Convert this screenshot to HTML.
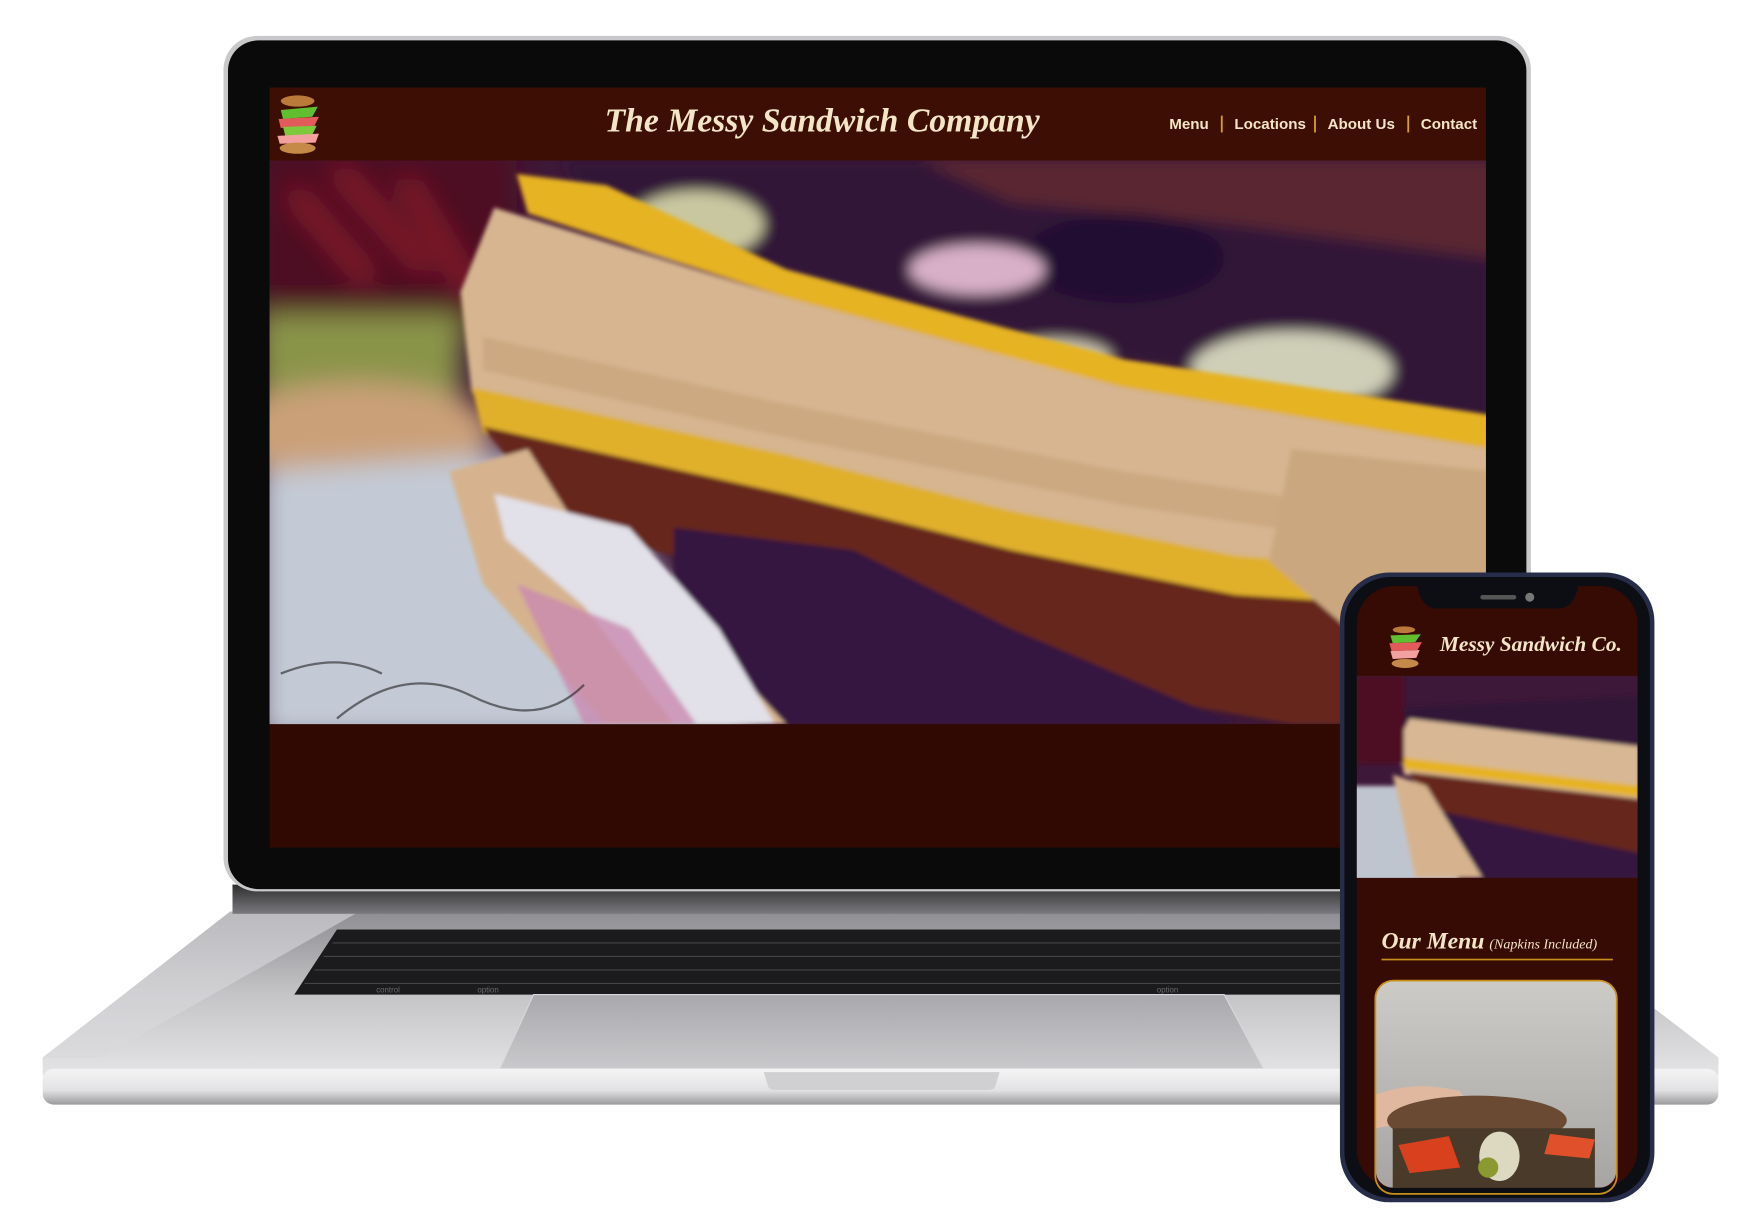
<!DOCTYPE html>
<html><head><meta charset="utf-8"><style>
html,body{margin:0;padding:0;background:#fff;width:1760px;height:1227px;overflow:hidden}
svg{display:block}
</style></head><body>
<svg width="1760" height="1227" viewBox="0 0 1567 1093" preserveAspectRatio="none" xmlns="http://www.w3.org/2000/svg">
<defs>
<filter id="b2" x="-20%" y="-20%" width="140%" height="140%"><feGaussianBlur stdDeviation="2"/></filter>
<filter id="b6" x="-20%" y="-20%" width="140%" height="140%"><feGaussianBlur stdDeviation="6"/></filter>
<filter id="b12" x="-20%" y="-20%" width="140%" height="140%"><feGaussianBlur stdDeviation="12"/></filter>
<linearGradient id="deck" x1="0" y1="0" x2="0" y2="1"><stop offset="0" stop-color="#8e8e92"/><stop offset="0.5" stop-color="#c4c4c7"/><stop offset="1" stop-color="#e4e4e6"/></linearGradient>
<linearGradient id="lip" x1="0" y1="0" x2="0" y2="1"><stop offset="0" stop-color="#f4f4f5"/><stop offset="0.6" stop-color="#e2e2e4"/><stop offset="1" stop-color="#9a9a9e"/></linearGradient>
<linearGradient id="hinge" x1="0" y1="0" x2="0" y2="1"><stop offset="0" stop-color="#2e2e30"/><stop offset="1" stop-color="#7a7a7e"/></linearGradient>
<linearGradient id="pad" x1="0" y1="0" x2="0" y2="1"><stop offset="0" stop-color="#a9a9ad"/><stop offset="1" stop-color="#c9c9cc"/></linearGradient>
<linearGradient id="card" x1="0" y1="0" x2="0" y2="1"><stop offset="0" stop-color="#cdcbc7"/><stop offset="1" stop-color="#a7a5a1"/></linearGradient>
<clipPath id="hero"><rect x="240" y="143" width="1083" height="502"/></clipPath>
<clipPath id="phimg"><rect x="1208" y="602" width="250" height="180"/></clipPath>
<clipPath id="cardc"><rect x="1225" y="874" width="214" height="184" rx="15"/></clipPath>
</defs>

<polygon points="205,812 1360,812 1530,942 1530,958 38,958 38,942" fill="url(#deck)"/>
<polygon points="205,812 320,812 90,942 38,942" fill="#d9d9dc" opacity="0.6"/>
<polygon points="300,828 1200,828 1196,886 262,886" fill="#1b1b1d"/>
<g stroke="#444" stroke-width="1">
<line x1="296" y1="840" x2="1200" y2="840"/><line x1="288" y1="852" x2="1199" y2="852"/><line x1="280" y1="864" x2="1198" y2="864"/><line x1="271" y1="876" x2="1197" y2="876"/>
</g>
<g fill="#6a6a6e" font-family="Liberation Sans" font-size="7"><text x="335" y="884">control</text><text x="425" y="884">option</text><text x="1030" y="884">option</text></g>
<polygon points="475,886 1090,886 1125,952 445,952" fill="url(#pad)" stroke="#d8d8da" stroke-width="1"/>
<rect x="38" y="952" width="1492" height="32" rx="10" fill="url(#lip)"/>
<path d="M680,955 L890,955 L886,968 Q885,971 880,971 L690,971 Q685,971 684,968 Z" fill="#d0d0d3"/>
<rect x="207" y="788" width="1150" height="26" fill="url(#hinge)"/>
<rect x="199" y="32" width="1164" height="762" rx="30" fill="#c9c9cc"/>
<rect x="203" y="36" width="1156" height="756" rx="27" fill="#0a0a0b"/>
<rect x="240" y="78" width="1083" height="677" fill="#300a02"/>
<rect x="240" y="78" width="1083" height="65" fill="#3c0e04"/>
<g>
<ellipse cx="265" cy="90" rx="15" ry="5" fill="#b97a3a"/>
<path d="M250,98 L283,95 L278,104 L252,106Z" fill="#5fbf2e"/>
<path d="M248,106 L284,104 L280,112 L250,114Z" fill="#e25a5a"/>
<path d="M252,113 L282,112 L278,120 L254,121Z" fill="#7ec83b"/>
<path d="M247,121 L284,119 L281,127 L249,128Z" fill="#f2a0a0"/>
<ellipse cx="265" cy="132" rx="16" ry="5" fill="#c58a48"/>
</g>
<text x="732" y="117" text-anchor="middle" font-family="Liberation Serif" font-style="italic" font-weight="bold" font-size="30" fill="#f3e5c6">The Messy Sandwich Company</text>
<g font-family="Liberation Sans" font-size="13.5" fill="#f3e5c6" font-weight="bold">
<text x="1041" y="115">Menu</text><text x="1099" y="115">Locations</text><text x="1182" y="115">About Us</text><text x="1265" y="115">Contact</text>
</g>
<g fill="#d9a21e"><rect x="1087" y="103" width="1.6" height="15"/><rect x="1170" y="103" width="1.6" height="15"/><rect x="1253" y="103" width="1.6" height="15"/></g>

<g clip-path="url(#hero)">
<rect x="240" y="143" width="1083" height="502" fill="#3e1838"/>
<g filter="url(#b12)">
<rect x="230" y="130" width="230" height="170" fill="#4e1024"/>
<path d="M260,170 L330,250 M300,150 L380,240 M360,160 L420,260" stroke="#a02030" stroke-width="10"/>
<rect x="230" y="280" width="180" height="80" fill="#8a9448"/>
<ellipse cx="320" cy="385" rx="120" ry="45" fill="#caa078"/>
<polygon points="230,420 520,400 680,660 230,660" fill="#c3cad6"/>
</g>
<g filter="url(#b6)">
<polygon points="500,143 1330,143 1330,380 1000,320 700,250 520,175" fill="#321638"/>
<polygon points="820,143 1330,143 1330,230 1100,200 900,180" fill="#5a2633"/>
<ellipse cx="1000" cy="230" rx="90" ry="40" fill="#231030"/>
<ellipse cx="870" cy="240" rx="60" ry="22" fill="#d8b0c8"/>
<ellipse cx="1150" cy="330" rx="90" ry="35" fill="#cfcfb8"/>
<ellipse cx="620" cy="200" rx="60" ry="30" fill="#c9c7a0"/>
<ellipse cx="940" cy="320" rx="50" ry="18" fill="#cfc7b0"/>
</g>
<g filter="url(#b2)">
<polygon points="460,155 540,165 700,240 1000,320 1330,370 1330,400 1000,345 700,265 470,190" fill="#e6b322"/>
<polygon points="440,185 700,265 1000,345 1330,400 1330,520 1100,500 900,460 700,410 420,350 410,260" fill="#d6b590"/>
<polygon points="430,300 700,360 1000,420 1330,470 1330,500 1000,450 700,390 430,330" fill="#c9a47c" opacity="0.7"/>
<polygon points="420,345 700,405 900,455 1100,495 1330,515 1330,545 1100,530 900,490 700,440 430,385" fill="#e0b02a"/>
<polygon points="430,380 700,440 900,490 1100,530 1330,545 1330,645 1150,645 900,600 700,520 500,470" fill="#66261f"/>
<polygon points="600,470 760,490 900,560 1100,645 600,645" fill="#35173f"/>
<polygon points="400,420 470,400 520,480 620,560 700,645 540,645 430,520" fill="#d6b38e"/>
<polygon points="440,440 560,470 640,560 690,645 600,645 520,540 450,480" fill="#e2e0e8"/>
<polygon points="460,520 560,560 620,645 520,645" fill="#c98ab0" opacity="0.8"/>
<polygon points="1150,400 1330,420 1330,580 1200,560 1130,500" fill="#caa77f"/>
</g>
<g stroke="#222" stroke-width="2" fill="none" opacity="0.6"><path d="M300,640 Q360,590 420,620 T520,610"/><path d="M250,600 Q300,580 340,600"/></g>
</g>

<rect x="1193" y="510" width="280" height="561" rx="44" fill="#272c48"/>
<rect x="1197" y="514" width="272" height="553" rx="41" fill="#0d0e14"/>
<rect x="1208" y="522" width="250" height="536" rx="34" fill="#360b03"/>
<path d="M1262,522 L1405,522 Q1402,540 1390,542 L1277,542 Q1265,540 1262,522Z" fill="#0d0e14"/>
<rect x="1318" y="530" width="32" height="4" rx="2" fill="#555"/>
<circle cx="1362" cy="532" r="4" fill="#777"/>
<g>
<ellipse cx="1250" cy="561" rx="10" ry="3" fill="#b97a3a"/>
<path d="M1238,566 L1265,565 L1260,572 L1240,573Z" fill="#5fbf2e"/>
<path d="M1237,573 L1266,572 L1262,579 L1239,580Z" fill="#e25a5a"/>
<path d="M1238,580 L1264,579 L1261,586 L1240,587Z" fill="#f2a0a0"/>
<ellipse cx="1251" cy="591" rx="12" ry="4" fill="#c58a48"/>
</g>
<text x="1282" y="580" font-family="Liberation Serif" font-style="italic" font-weight="bold" font-size="19" fill="#f3e5c6">Messy Sandwich Co.</text>
<g clip-path="url(#phimg)">
<rect x="1208" y="602" width="250" height="180" fill="#3e1838"/>
<g filter="url(#b2)">
<polygon points="1200,700 1280,700 1300,790 1200,790" fill="#bfc5cf"/>
<polygon points="1250,630 1460,620 1460,690 1250,650" fill="#321638"/>
<polygon points="1255,640 1460,665 1460,720 1250,690 1245,660" fill="#d8b894"/>
<polygon points="1250,675 1460,700 1460,710 1250,685" fill="#e6b322"/>
<polygon points="1255,688 1460,712 1460,760 1270,720" fill="#66261f"/>
<polygon points="1265,720 1460,760 1460,782 1290,782" fill="#35173f"/>
<polygon points="1240,690 1270,700 1320,782 1260,782" fill="#d6b38e"/>
<polygon points="1208,602 1250,602 1250,680 1208,680" fill="#4e1024"/>
</g>
</g>
<text x="1230" y="845" font-family="Liberation Serif" font-style="italic" font-weight="bold" font-size="21" fill="#f3e5c6">Our Menu</text>
<text x="1326" y="845" font-family="Liberation Serif" font-style="italic" font-size="12.5" fill="#f3e5c6">(Napkins Included)</text>
<rect x="1230" y="854" width="206" height="1.5" fill="#c8901a"/>
<g clip-path="url(#cardc)">
<rect x="1225" y="874" width="214" height="184" fill="url(#card)"/>
<path d="M1225,975 Q1260,962 1300,972 L1310,990 L1225,1005Z" fill="#e0b8a0"/>
<ellipse cx="1315" cy="998" rx="80" ry="22" fill="#6b4a34"/>
<rect x="1240" y="1005" width="180" height="53" fill="#4a3a2a"/>
<path d="M1245,1020 L1290,1012 L1300,1040 L1255,1045Z" fill="#d8401e"/>
<path d="M1380,1010 L1420,1015 L1415,1032 L1375,1028Z" fill="#e0502a"/>
<ellipse cx="1335" cy="1030" rx="18" ry="22" fill="#ddd8c0"/>
<circle cx="1325" cy="1040" r="9" fill="#8a9a30"/>
</g>
<rect x="1224.5" y="873.5" width="215" height="190" rx="16" fill="none" stroke="#c8901a" stroke-width="1.6"/>
</svg>
</body></html>
